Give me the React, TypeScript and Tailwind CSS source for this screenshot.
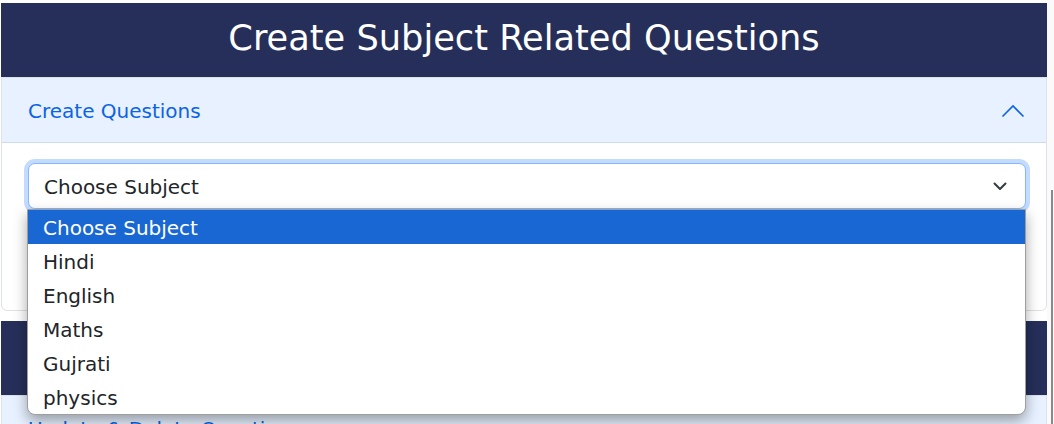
import React from 'react';

const SUBJECTS = ['Choose Subject', 'Hindi', 'English', 'Maths', 'Gujrati', 'physics'];

function ChevronUp() {
  return (
    <svg width="24" height="14" viewBox="0 0 24 14" fill="none">
      <polyline points="1.5,12.5 12,2 22.5,12.5" stroke="#0c63e4" strokeWidth="1.6" />
    </svg>
  );
}

function ChevronDown() {
  return (
    <svg width="14" height="9" viewBox="0 0 14 9" fill="none">
      <polyline points="1.5,1.5 7,7 12.5,1.5" stroke="#343a40" strokeWidth="2" strokeLinecap="round" strokeLinejoin="round" />
    </svg>
  );
}

export default function App() {
  return (
    <div className="relative flex w-[1054px] h-[424px] overflow-hidden bg-white font-['DejaVu_Sans',sans-serif] text-[#212529]">
      <div className="w-[1047px] pt-[3px] pl-px flex flex-col gap-[10px]">
        {/* create card */}
        <section>
          <div className="h-[74px] bg-[#252f59] flex items-center justify-center pb-[4px]">
            <h1 className="text-white text-[35.2px] leading-none">Create Subject Related Questions</h1>
          </div>
          <div className="border border-[#dee2e6] rounded-b-md">
            <div className="h-[65px] bg-[#e7f1ff] border-b border-[#cfdbeb] flex items-center justify-between pl-[26px] pr-[21px] pt-[2px]">
              <span className="text-[#0c63e4] text-[20px]">Create Questions</span>
              <ChevronUp />
            </div>
            <div className="pt-[20px] pl-[26px] pr-[20px] h-[167px]">
              <div className="relative">
                <div className="h-[46px] rounded-[7px] border border-[#86b7fe] ring-4 ring-[#c2dbfe] bg-white flex items-center justify-between pl-[15px] pr-[18px] pt-px">
                  <span className="text-[20px]">Choose Subject</span>
                  <ChevronDown />
                </div>
                {/* native options popup */}
                <ul className="absolute -left-px right-0 top-[46px] z-10 bg-white border border-[#9e9e9e] rounded-b-lg shadow-[0_6px_14px_rgba(0,0,0,0.35)] overflow-hidden">
                  {SUBJECTS.map((s, i) => (
                    <li
                      key={s}
                      className={
                        i === 0
                          ? 'h-[34px] flex items-center pl-[15px] pt-[2px] text-[20px] bg-[#1967d2] text-white'
                          : 'h-[34px] flex items-center pl-[15px] pt-[2px] text-[20px]'
                      }
                    >
                      {s}
                    </li>
                  ))}
                </ul>
              </div>
            </div>
          </div>
        </section>

        {/* update card */}
        <section>
          <div className="h-[74px] bg-[#252f59] flex items-center justify-center pb-[4px]">
            <h2 className="text-white text-[35.2px] leading-none">Manage Subject Questions</h2>
          </div>
          <div className="border border-[#dee2e6]">
            <div className="h-[65px] bg-[#e7f1ff] border-b border-[#cfdbeb] flex items-center justify-between pl-[26px] pr-[21px] pt-[2px]">
              <span className="text-[#0c63e4] text-[20px]">Update &amp; Delete Questions</span>
            </div>
          </div>
        </section>
      </div>

      {/* page scrollbar */}
      <div className="relative w-[7px] bg-[#fafafa]">
        <div className="absolute right-[1px] top-[190px] bottom-0 w-[2px] bg-[#8a8a8a]" />
      </div>
    </div>
  );
}
